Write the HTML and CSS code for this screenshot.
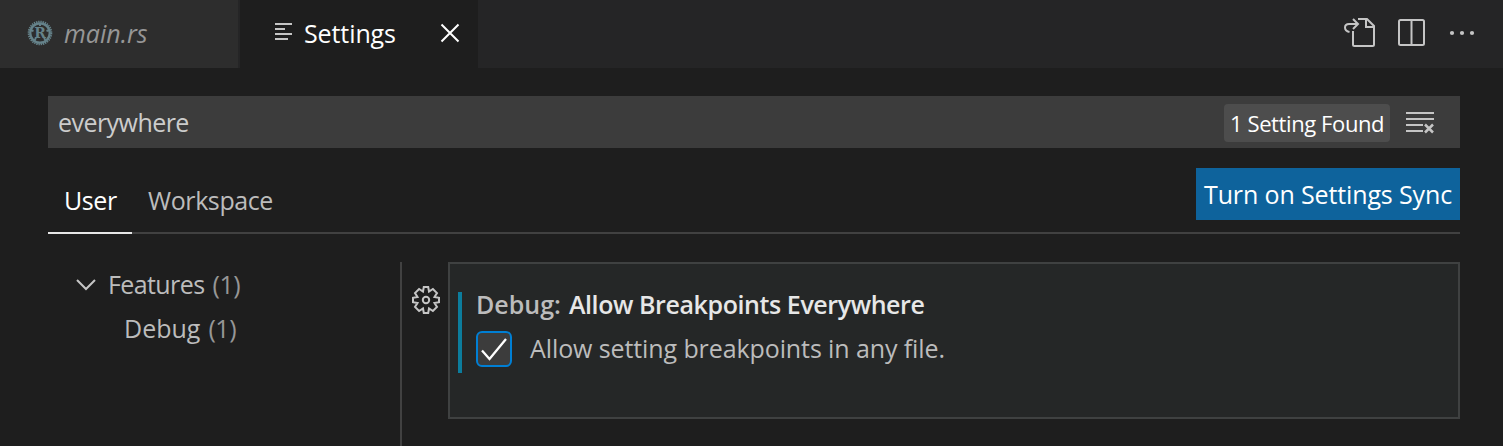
FILE: index.html
```html
<!DOCTYPE html>
<html lang="en">
<head>
<meta charset="utf-8">
<title>Settings</title>
<link rel="stylesheet" href="styles.css">
</head>
<body>
<header class="tabbar">
  <div class="tab tab-file">
    <svg class="rust" width="26" height="26" viewBox="0 0 26 26"><circle class="teeth" cx="13" cy="13" r="11.3"/><circle class="ring" cx="13" cy="13" r="9.700"/><path class="bolts" d="M13 3v3M3.500 10l3 1M22.500 10l-3 1M7 21l2-3M19 21l-2-3"/><text x="13" y="17.800" text-anchor="middle">R</text></svg>
    <span class="label file-label">main.rs</span>
  </div>
  <div class="tab tab-active">
    <svg class="lines" width="18" height="20" viewBox="0 0 18 20"><path d="M0 2h17M0 7h10M0 12h17M0 17h13"/></svg>
    <span class="label settings-label">Settings</span>
    <svg class="close" width="20" height="20" viewBox="0 0 20 20"><path d="M1.500 1.500l17 17M18.500 1.500l-17 17"/></svg>
  </div>
  <div class="actions">
    <svg width="32" height="30" viewBox="0 0 32 30"><path d="M14 1h9l7 7v18.500q0 1.500-1.500 1.500h-18q-1.500 0-1.500-1.500V13M22 1v8h8M5.500 14Q1 13 1 9.500T5 6h9M9 1l5 5-5 5"/></svg>
    <svg width="28" height="28" viewBox="0 0 28 28"><rect x="1" y="1" width="25" height="25" rx="1.500"/><path d="M13.500 1v25"/></svg>
    <svg class="dots" width="26" height="6" viewBox="0 0 26 6"><circle cx="3" cy="3" r="2.100"/><circle cx="13" cy="3" r="2.100"/><circle cx="23" cy="3" r="2.100"/></svg>
  </div>
</header>
<main class="editor">
  <div class="search">
    <span class="label query">everywhere</span>
    <span class="label found">1 Setting Found</span>
    <svg class="clear" width="30" height="22" viewBox="0 0 30 22"><path d="M0 1h28M0 7h28M0 13h17M0 19h17"/><path class="cross" d="M19 12.500l8 8M27 12.500l-8 8"/></svg>
  </div>
  <nav class="scopes">
    <span class="label scope scope-user">User</span>
    <span class="label scope scope-workspace">Workspace</span>
    <button class="label sync">Turn on Settings Sync</button>
  </nav>
  <div class="content">
    <aside class="toc">
      <div class="row"><svg class="chevron" width="20" height="12" viewBox="0 0 20 12"><path d="M1 1l9 9 9-9"/></svg><span class="label features">Features</span><span class="label count">(1)</span></div>
      <div class="row child"><span class="label debug">Debug</span><span class="label count">(1)</span></div>
    </aside>
    <div class="gutter"><svg class="gear" width="30" height="30" viewBox="-15 -15 30 30"><path d="M-2.200-13H2.200L3-8.500 6.900-11 11-6.900 8.500-3 13-2.200V2.200L8.500 3 11 6.900 6.900 11 3 8.500 2.200 13H-2.200L-3 8.500-6.900 11-11 6.900-8.500 3-13 2.200V-2.200L-8.500-3-11-6.900-6.900-11-3-8.500Z"/><circle r="3.200"/></svg></div>
    <section class="setting">
      <div class="modified">
        <div class="title"><span class="label category">Debug:</span><span class="label name">Allow Breakpoints Everywhere</span></div>
        <div class="option">
          <span class="checkbox"><svg width="28" height="26" viewBox="0 0 28 26"><path d="M2 14.500l7.500 8.500L26 3"/></svg></span>
          <span class="label description">Allow setting breakpoints in any file.</span>
        </div>
      </div>
    </section>
  </div>
</main>
</body>
</html>
```
FILE: styles.css
```css
* { box-sizing: border-box; }
body { margin: 0; height: 446px; overflow: hidden; background: #1e1e1e; color: #bcbcbc; font: 25px/36px "Open Sans", "Noto Sans", sans-serif; }
svg { display: block; flex: none; fill: none; stroke: #c5c5c5; stroke-width: 2; }
.label { white-space: nowrap; flex: none; }
.tabbar { height: 68px; display: flex; background: #252526; }
.tab { display: flex; align-items: center; }
.tab-file { width: 240px; padding-left: 27px; background: #2d2d2d; border-right: 2px solid #252526; }
.rust { margin-top: -3px; stroke: #65828a; }
.rust .teeth { stroke-width: 2; stroke-dasharray: 1.4 .82; }
.rust .ring { stroke-width: 2.2; }
.rust .bolts { stroke-width: 2; }
.rust text { fill: #65828a; stroke: none; font: bold 14px "DejaVu Serif", serif; }
.file-label { margin: -2px 0 0 11px; font-style: italic; color: #969696; }
.tab-active { width: 238px; padding-left: 35px; background: #1e1e1e; color: #fff; }
.lines { margin-top: -4px; }
.settings-label { width: 94px; margin: -2px 0 0 11px; letter-spacing: -.1px; }
.close { margin-left: 42px; margin-top: -2px; stroke: #fff; }
.actions { margin-left: auto; padding-right: 28px; display: flex; align-items: center; gap: 22px; margin-top: -3px; }
.dots { fill: #c5c5c5; stroke: none; margin-left: 1px; }
.editor { padding: 28px 43px 0 48px; }
.search { height: 52px; display: flex; align-items: center; padding: 0 24px 0 10px; background: #3c3c3c; color: #ccc; }
.query { letter-spacing: -.55px; }
.found { width: 166px; height: 38px; margin: 2px 0 0 auto; padding-left: 6px; line-height: 38px; border-radius: 4px; background: #4d4d4d; color: #fff; font-size: 22px; letter-spacing: -.4px; }
.clear { margin: 2px 0 0 16px; }
.clear .cross { stroke-width: 2.500; }
.scopes { height: 86px; padding-top: 20px; display: flex; border-bottom: 2px solid #414141; }
.scope { height: 66px; line-height: 64px; letter-spacing: -.4px; }
.scope-user { width: 84px; padding-left: 16px; color: #fff; border-bottom: 2px solid #e7e7e7; }
.scope-workspace { margin-left: 16px; }
.sync { width: 264px; height: 52px; margin-left: auto; padding: 0 0 0 8px; border: 0; background: #0e639c; color: #fff; text-align: left; font: inherit; letter-spacing: -.13px; }
.content { height: 184px; margin-top: 28px; display: flex; }
.toc { width: 354px; padding: 0 0 0 28px; border-right: 2px solid #414141; }
.row { height: 44px; display: flex; align-items: center; }
.chevron { margin: 2px 12px 0 0; }
.features { letter-spacing: -.6px; }
.child { padding-left: 48px; }
.count { margin-left: 8px; color: #969696; letter-spacing: -.4px; }
.gutter { width: 46px; padding: 23px 0 0 9px; }
.setting { width: 1012px; height: 157px; padding: 28px 0 0 8px; border: 2px solid #3f4141; background: #252727; }
.modified { height: 81px; padding-left: 14px; border-left: 4px solid #0c7d9d; }
.title { height: 26px; line-height: 24px; display: flex; font-weight: 600; }
.name { margin-left: 8px; color: #e7e7e7; letter-spacing: -.41px; }
.option { display: flex; align-items: center; margin-top: 13px; }
.checkbox { width: 36px; height: 36px; padding: 3px 2px; border: 2px solid #007fd4; border-radius: 6px; background: #3c3c3c; }
.checkbox svg { stroke: #fff; stroke-width: 2.300; }
.description { margin: -2px 0 0 18px; letter-spacing: -.1px; }
```
